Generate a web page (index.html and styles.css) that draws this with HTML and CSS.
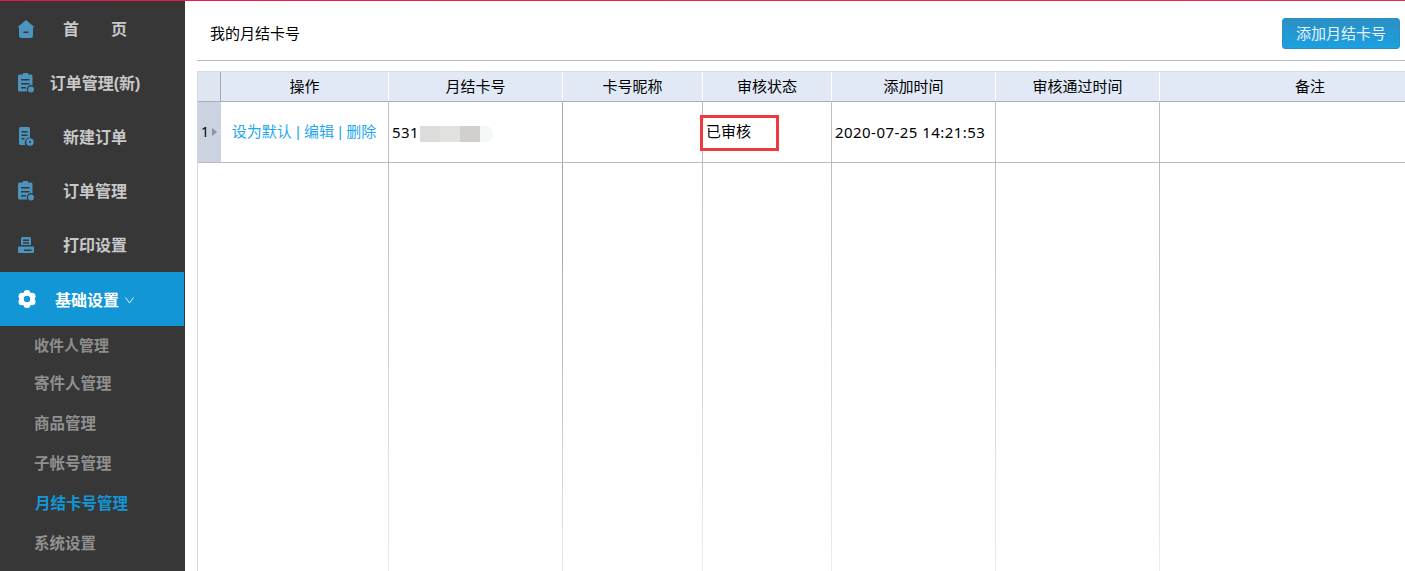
FILE: index.html
```html
<!DOCTYPE html>
<html lang="zh">
<head>
<meta charset="utf-8">
<title>我的月结卡号</title>
<link rel="stylesheet" href="styles.css">
</head>
<body>
<div class="topline"></div>
<div class="app">
  <aside class="side">
    <a class="nav"><svg class="ico" viewBox="0 0 16 18"><path d="M8 0 16 6.800V7.600H15V15.500A2.500 2.500 0 0 1 12.500 18H3.500A2.500 2.500 0 0 1 1 15.500V7.600H0V6.800ZM5.500 11.500V13H10.500V11.500Z" fill-rule="evenodd"/></svg><span class="label">首&emsp;&emsp;页</span></a>
    <a class="nav"><svg class="ico tall" viewBox="0 0 16 20"><path d="M5 0h5v1.500h3A1.500 1.500 0 0 1 14.500 3v9.600a4 4 0 0 0-5 5.900H1.500A1.500 1.500 0 0 1 0 17V3a1.500 1.500 0 0 1 1.500-1.500H5zM3 6v1.600h8.500V6zm0 4v1.600h8.500V10zm0 4v1.600h5V14z" fill-rule="evenodd"/><circle cx="13" cy="16.500" r="3"/></svg><span class="label">订单管理(新)</span></a>
    <a class="nav"><svg class="ico tall" viewBox="0 0 16 20"><path d="M2.500 0h8A1.500 1.500 0 0 1 12 1.500v9a5 5 0 0 0-4.500 7.500h-5A1.500 1.500 0 0 1 1 16.500v-15A1.500 1.500 0 0 1 2.500 0zM3.500 4v1.500h6V4zm0 3.500V9h6V7.500zm0 3.500v1.500h3V11z" fill-rule="evenodd"/><path d="M12 11.200a3.800 3.800 0 1 0 0 7.600 3.800 3.800 0 0 0 0-7.600zm0 2.800a1 1 0 1 1 0 2 1 1 0 0 1 0-2z" fill-rule="evenodd"/></svg><span class="label">新建订单</span></a>
    <a class="nav"><svg class="ico tall" viewBox="0 0 16 20"><path d="M5 0h5v1.500h3A1.500 1.500 0 0 1 14.500 3v9.600a4 4 0 0 0-5 5.900H1.500A1.500 1.500 0 0 1 0 17V3a1.500 1.500 0 0 1 1.500-1.500H5zM3 6v1.600h8.500V6zm0 4v1.600h8.500V10zm0 4v1.600h5V14z" fill-rule="evenodd"/><circle cx="13" cy="16.500" r="3"/></svg><span class="label">订单管理</span></a>
    <a class="nav"><svg class="ico" viewBox="0 0 16 18"><path d="M4.500 1h7A1.500 1.500 0 0 1 13 2.500V9H3V2.500A1.500 1.500 0 0 1 4.500 1zM5 3.500V5h6V3.500zM5 6.300v1.400h6V6.300z" fill-rule="evenodd"/><path d="M1 10.500h14a1 1 0 0 1 1 1V16a1 1 0 0 1-1 1H1a1 1 0 0 1-1-1v-4.500a1 1 0 0 1 1-1zM6 13.500V15h7.500v-1.500z" fill-rule="evenodd"/></svg><span class="label">打印设置</span></a>
    <a class="nav active"><svg class="ico cog" viewBox="0 0 18 18"><circle cx="9" cy="3.500" r="3.500"/><circle cx="14" cy="6.200" r="3.500"/><circle cx="14" cy="11.800" r="3.500"/><circle cx="9" cy="14.500" r="3.500"/><circle cx="4" cy="11.800" r="3.500"/><circle cx="4" cy="6.200" r="3.500"/><circle class="hub" cx="9" cy="9" r="3.200"/></svg><span class="label-active">基础设置</span><svg class="caret" viewBox="0 0 9 7"><path d="M.5.500 4.500 6 8.500.500"/></svg></a>
    <ul class="sub">
      <li class="first">收件人管理</li>
      <li class="second">寄件人管理</li>
      <li>商品管理</li>
      <li>子帐号管理</li>
      <li class="cur">月结卡号管理</li>
      <li>系统设置</li>
    </ul>
  </aside>
  <main class="main">
    <header class="head">
      <h1 class="title">我的月结卡号</h1>
      <button class="add">添加月结卡号</button>
    </header>
    <div class="grid">
      <div class="hrow">
        <div class="c0"></div>
        <div class="c1">操作</div>
        <div class="c2">月结卡号</div>
        <div class="c3">卡号昵称</div>
        <div class="c4">审核状态</div>
        <div class="c5">添加时间</div>
        <div class="c6">审核通过时间</div>
        <div class="c7">备注</div>
      </div>
      <div class="brow">
        <div class="c0 idx">1<i class="arrow"></i></div>
        <div class="c1 links">设为默认 | 编辑 | 删除</div>
        <div class="c2 left num">531<span class="mask"><b class="m1"></b><b class="m2"></b><b class="m3"></b><b class="m4"></b></span></div>
        <div class="c3"></div>
        <div class="c4 left status">已审核<span class="mark"></span></div>
        <div class="c5 left num">2020-07-25 14:21:53</div>
        <div class="c6"></div>
        <div class="c7"></div>
      </div>
      <div class="rest">
        <div class="c0 none"></div>
        <div class="c1"></div>
        <div class="c2"></div>
        <div class="c3"></div>
        <div class="c4"></div>
        <div class="c5"></div>
        <div class="c6"></div>
        <div class="c7"></div>
      </div>
    </div>
  </main>
</div>
</body>
</html>
```

FILE: styles.css
```css
* { box-sizing: border-box; }
html, body { margin: 0; height: 571px; overflow: hidden; background: #fff; }
body { font: 15px/20px "Liberation Sans", "Noto Sans CJK SC", sans-serif; color: #000; }
.topline { height: 1px; background: linear-gradient(90deg, #e8194a, #ee2a50); }
.app { display: flex; height: 570px; }
.side { width: 185px; flex: none; background: #373737; overflow: hidden; padding-top: 1px; }
.nav { display: flex; align-items: center; height: 54px; padding-left: 18px; color: #c8c8c8; font-size: 16px; font-weight: bold; }
.ico { width: 16px; height: 18px; fill: #4a94bd; flex: none; }
.tall { height: 20px; }
.label { flex: none; width: 106px; margin-left: 8px; padding-top: 2px; text-align: center; white-space: nowrap; }
.active { background: #1296d6; color: #fff; width: 184px; }
.cog { fill: #fff; width: 18px; }
.hub { fill: #1296d6; }
.label-active { margin-left: 19px; padding-top: 3px; }
.caret { width: 9px; height: 7px; margin: 3px 0 0 6px; fill: none; stroke: #dff1fb; stroke-width: 1; }
.sub { list-style: none; margin: 1px 0 0; padding: 0 0 0 34px; color: #909090; font-weight: bold; font-size: 15.500px; }
.sub li { height: 40px; line-height: 40px; white-space: nowrap; }
.sub .first { height: 38px; line-height: 38px; font-size: 15px; color: #8d8d8d; }
.sub .second { height: 39px; line-height: 38px; }
.sub .cur { color: #1296d6; padding-left: 1px; }
.main { flex: 1; min-width: 0; padding-left: 12px; }
.head { display: flex; justify-content: space-between; align-items: flex-start; height: 60px; border-bottom: 1px solid #b4b9c6; padding: 17px 5px 0 13px; }
.title { margin: 6px 0 0; font-size: 15px; font-weight: normal; line-height: 20px; }
.add { width: 118px; height: 31px; padding: 0 0 2px; border: 1px solid #2a8fc4; border-radius: 3px; background: linear-gradient(#2a90c4, #1ba0e0); color: #e8f5fc; font: 15px "Liberation Sans", "Noto Sans CJK SC", sans-serif; }
.grid { margin-top: 10px; width: 1208px; height: 500px; display: flex; flex-direction: column; border-left: 1px solid #d6d8de; }
.hrow, .brow, .rest { display: flex; flex: none; }
.hrow > div, .brow > div, .rest > div { flex: none; }
.c0 { width: 23px; }
.c1 { width: 168px; }
.c2 { width: 174px; }
.c3 { width: 140px; }
.c4 { width: 129px; }
.c5 { width: 164px; }
.c6 { width: 164px; }
.c7 { width: 246px; }
.hrow { height: 31px; background: #e1e9f6; border-top: 1px solid #d8dce4; border-bottom: 1px solid #a9adb8; }
.hrow > div { line-height: 29px; text-align: center; border-right: 1px solid #fff; }
.hrow .c0 { border-right-color: #a2a7b2; background: #dfe6f2; }
.hrow .c7 { width: 300px; border-right: 0; }
.brow { height: 61px; border-bottom: 1px solid #bcbcc2; }
.brow > div { line-height: 60px; border-right: 1px solid #bcbcc2; white-space: nowrap; }
.brow .c2 { border-right-color: #a4a8b4; }
.brow .c7 { border-right: 0; }
.idx { background: #cbd3e0; border-right: 0 !important; padding-left: 3px; display: flex; align-items: center; font: 14px/20px "Noto Sans", sans-serif; }
.arrow { width: 0; height: 0; margin-left: 3px; border-left: 5px solid #8e939c; border-top: 4.500px solid transparent; border-bottom: 4.500px solid transparent; }
.links { color: #1fa8ee; text-align: center; padding-right: 1px; }
.left { padding-left: 3px; }
.c2.left { padding-left: 3px; }
.num { font-family: "Noto Sans", "Noto Sans CJK SC", sans-serif; letter-spacing: .45px; }
.mask { display: inline-flex; vertical-align: middle; height: 16px; margin-left: 1px; }
.mask b { display: block; height: 16px; }
.m1 { width: 20px; background: #dcdcda; }
.m2 { width: 20px; background: #e1e1df; }
.m3 { width: 20px; background: #d1d0ce; }
.m4 { width: 13px; background: #f6f7f9; border-radius: 0 7px 7px 0; }
.status { position: relative; }
.mark { position: absolute; left: -3px; top: 13px; width: 79px; height: 36px; border: 3px solid #f0393c; }
.rest { flex: 1; }
.rest > div { border-right: 1px solid; border-image: linear-gradient(#bcbcc2, #ececf0) 1; }
.rest .c2 { border-image: linear-gradient(#a4a8b4 20%, #e6e8ee) 1; }
.rest .none, .rest .c7 { border-right: 0; }
```
